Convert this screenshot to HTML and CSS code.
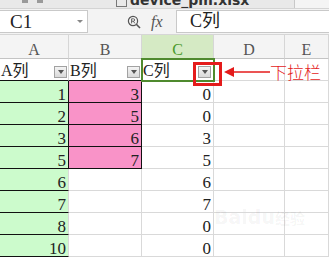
FILE: index.html
```html
<!DOCTYPE html>
<html lang="zh">
<head>
  <meta charset="utf-8">
  <title>C列 下拉栏</title>
  <link rel="stylesheet" href="styles.css">
</head>
<body>
  <div class="tabbar">
    <span class="tb-icons"><i></i><i></i></span>
    <span class="doc-icon"></span>
    <span class="tab-title">device_pm.xlsx</span>
    <span class="tab-plus"></span>
  </div>
  <div class="formulabar">
    <div class="namebox"><span>C1</span><span class="nb-arrow"></span></div>
    <div class="fb-tools">
      <svg class="zoom-icon" width="14" height="14" viewBox="0 0 14 14">
        <circle cx="6" cy="6" r="4.6" fill="none" stroke="#555" stroke-width="1.2"/>
        <path d="M9.3 9.3 L13 13" stroke="#555" stroke-width="1.6"/>
        <path d="M4.6 8.4 V3.8 H6.4 Q7.7 3.8 7.7 5 Q7.7 6.2 6.4 6.2 H4.6 M6.3 6.2 L7.9 8.4" fill="none" stroke="#555" stroke-width="0.9"/>
      </svg>
      <span class="fx">fx</span>
    </div>
    <div class="fb-input">C列</div>
  </div>
  <div class="sheet">
    <div class="colhead">A</div>
    <div class="colhead">B</div>
    <div class="colhead active">C</div>
    <div class="colhead">D</div>
    <div class="colhead">E</div>

    <div class="cell title black-bottom"><span>A列</span><span class="dd"></span></div>
    <div class="cell title black-bottom"><span>B列</span><span class="dd"></span></div>
    <div class="cell title current"><span>C列</span><span class="dd"></span>
      <span class="marker"></span>
    </div>
    <div class="cell"></div>
    <div class="cell"></div>

    <div class="cell green black-right">1</div><div class="cell pink">3</div><div class="cell">0</div><div class="cell"></div><div class="cell"></div>
    <div class="cell green black-right">2</div><div class="cell pink">5</div><div class="cell">0</div><div class="cell"></div><div class="cell"></div>
    <div class="cell green black-right">3</div><div class="cell pink">6</div><div class="cell">3</div><div class="cell"></div><div class="cell"></div>
    <div class="cell green black-right">5</div><div class="cell pink">7</div><div class="cell">5</div><div class="cell"></div><div class="cell"></div>
    <div class="cell green">6</div><div class="cell"></div><div class="cell">6</div><div class="cell"></div><div class="cell"></div>
    <div class="cell green">7</div><div class="cell"></div><div class="cell">7</div><div class="cell"></div><div class="cell"></div>
    <div class="cell green">8</div><div class="cell"></div><div class="cell">0</div><div class="cell"></div><div class="cell"></div>
    <div class="cell green">10</div><div class="cell"></div><div class="cell">0</div><div class="cell"></div><div class="cell"></div>

    <div class="note">
      <svg width="46" height="12" viewBox="0 0 46 12">
        <path d="M0 6 L10 1 L10 11 Z" fill="#e41b1b"/>
        <path d="M9 6 H46" stroke="#e41b1b" stroke-width="1.5"/>
      </svg>
      <span>下拉栏</span>
    </div>
    <div class="watermark">Baidu<small>经验</small></div>
  </div>
</body>
</html>
```

FILE: styles.css
```css
body {
  margin: 0;
  width: 329px;
  height: 261px;
  overflow: hidden;
  background: #fff;
  font-family: "Liberation Serif", "Noto Sans CJK SC", serif;
  color: #222;
}

/* top tab strip, mostly cut off */
.tabbar {
  height: 9px;
  box-sizing: border-box;
  background: #e9e9e9;
  border-bottom: 1px solid #d4d4d4;
  display: flex;
  align-items: flex-start;
  overflow: hidden;
}
.tb-icons {
  display: flex;
  gap: 9px;
  margin-left: 22px;
  width: 94px;
}
.tb-icons i {
  display: block;
  width: 6px;
  height: 3px;
  background: #9a9a9a;
}
.doc-icon {
  width: 9px;
  height: 6px;
  border: 1px solid #777;
  border-top: none;
  margin-right: 3px;
}
.tab-title {
  font-family: "DejaVu Sans", sans-serif;
  font-weight: bold;
  font-size: 14px;
  line-height: 14px;
  margin-top: -7px;
  color: #333;
  width: 164px;
}
.tab-plus {
  flex: 1;
  height: 8px;
  background: #f4f4f4;
  border-left: 1px solid #c8c8c8;
}

/* formula bar */
.formulabar {
  height: 25px;
  box-sizing: border-box;
  padding-top: 1px;
  background: #f3f3f3;
  display: flex;
}
.namebox {
  width: 88px;
  height: 23px;
  box-sizing: border-box;
  background: #fff;
  border: 1px solid #c9c9c9;
  border-left: none;
  display: flex;
  align-items: center;
  justify-content: space-between;
  padding: 0 4px 0 10px;
  font-size: 19px;
}
.nb-arrow {
  width: 0;
  height: 0;
  border-left: 3px solid transparent;
  border-right: 3px solid transparent;
  border-top: 3px solid #888;
}
.fb-tools {
  width: 88px;
  display: flex;
  align-items: center;
  padding-left: 39px;
  gap: 10px;
  box-sizing: border-box;
}
.fx {
  font-style: italic;
  font-size: 16px;
  color: #555;
}
.fb-input {
  flex: 1;
  height: 23px;
  box-sizing: border-box;
  background: #fff;
  border: 1px solid #c9c9c9;
  border-right: none;
  padding-left: 13px;
  font-size: 18px;
  line-height: 21px;
}

/* sheet grid */
.sheet {
  position: relative;
  display: grid;
  grid-template-columns: 69px 73px 72px 71px 44px;
  grid-template-rows: 25px;
  grid-auto-rows: 22px;
}
.colhead {
  box-sizing: border-box;
  background: #f4f4f4;
  border-top: 1px solid #d6d6d6;
  border-right: 1px solid #d6d6d6;
  border-bottom: 1px solid #c4c4c4;
  text-align: center;
  font-size: 16px;
  line-height: 29px;
  color: #555;
}
.colhead.active {
  background: #d5eac4;
  color: #4a9a2c;
}
.cell {
  position: relative;
  box-sizing: border-box;
  border-right: 1px solid #d9d9d9;
  border-bottom: 1px solid #d9d9d9;
  display: flex;
  align-items: flex-end;
  justify-content: flex-end;
  padding-right: 2px;
  font-size: 17px;
  line-height: 14px;
  color: #222;
}
.cell.title {
  justify-content: space-between;
  padding: 0 1px 0 1px;
  font-size: 16px;
}
.cell.title > span:first-child {
  line-height: 16px;
  margin-bottom: 1px;
}
.dd {
  width: 13px;
  height: 12px;
  box-sizing: border-box;
  border: 1px solid #a2a2a2;
  background: linear-gradient(#f4f4f4, #d9d9d9);
  margin-bottom: 2px;
  display: flex;
  align-items: center;
  justify-content: center;
}
.dd::after {
  content: "";
  border-left: 3.5px solid transparent;
  border-right: 3.5px solid transparent;
  border-top: 4px solid #555;
}
.black-bottom {
  border-bottom-color: #111;
}
.green {
  background: #ccfbcc;
  border-bottom-color: #111;
}
.black-right {
  border-right-color: #111;
}
.pink {
  background: #f993c8;
  border-right-color: #111;
  border-bottom-color: #111;
}

/* active cell C1 */
.current {
  outline: 2px solid #4f8a2e;
  outline-offset: -1px;
  z-index: 1;
}
.current .dd {
  margin-right: 1px;
}
.marker {
  position: absolute;
  left: 51px;
  top: 3px;
  width: 29px;
  height: 24px;
  box-sizing: border-box;
  border: 3px solid #e41b1b;
}

/* red annotation */
.note {
  position: absolute;
  left: 224px;
  top: 28px;
  display: flex;
  align-items: center;
  gap: 0;
  color: #e41b1b;
  font-family: "Noto Sans CJK SC", sans-serif;
  font-weight: 300;
  font-size: 17px;
  line-height: 20px;
}
.watermark {
  position: absolute;
  left: 214px;
  top: 172px;
  font-family: "DejaVu Sans", sans-serif;
  font-weight: bold;
  font-size: 19px;
  color: rgba(0, 0, 0, 0.05);
}
.watermark small {
  font-family: "Noto Sans CJK SC", sans-serif;
  font-size: 15px;
}
```
